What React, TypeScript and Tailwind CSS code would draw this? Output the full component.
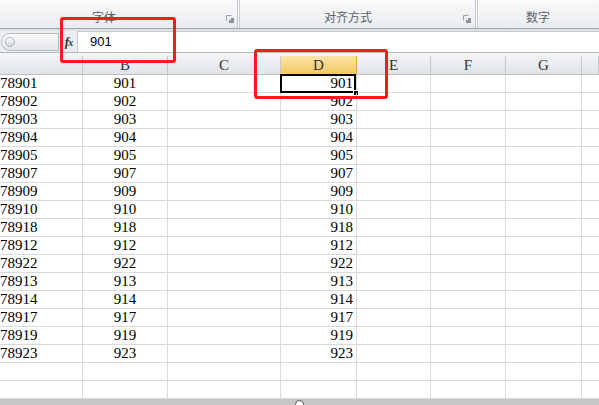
import React from "react";

const colA = [
  "78901", "78902", "78903", "78904", "78905", "78907", "78909", "78910",
  "78918", "78912", "78922", "78913", "78914", "78917", "78919", "78923",
];
const colB = colA.map((v) => v.slice(2));

const headers = ["", "B", "C", "D", "E", "F", "G", ""];
const gridCols = "grid grid-cols-[83px_85px_113px_76px_74px_75px_76px_1fr]";

const Launcher = () => (
  <svg width="8" height="8" viewBox="0 0 8 8" className="block">
    <path d="M0.5 0.5H5.5M0.5 0.5V5.5" stroke="#9aa0a6" strokeWidth="1" fill="none" />
    <rect x="3" y="3" width="5" height="5" fill="#8c9196" />
    <rect x="3" y="3" width="2" height="2" fill="#e6e8eb" />
  </svg>
);

const Divider = () => (
  <div className="flex h-full">
    <div className="w-px h-full bg-[#c3c6ca]" />
    <div className="w-px h-full bg-[#fbfbfc]" />
    <div className="w-px h-full bg-[#c9ccd0]" />
  </div>
);

export default function App() {
  const rows = Array.from({ length: 18 }, (_, i) => i);

  return (
    <div className="relative w-[599px] h-[405px] overflow-hidden bg-white font-['Liberation_Serif',serif]">
      {/* ribbon */}
      <div className="h-[28px] flex bg-gradient-to-b from-[#f9fafb] to-[#e9ecef] text-[12px] text-[#5d6166] font-['Noto_Sans_CJK_SC',sans-serif]">
        <div className="w-[237px] h-full flex items-end pb-[3px] relative">
          <span className="pl-[92px] leading-[16px]">字体</span>
          <div className="absolute left-[226px] top-[15px]">
            <Launcher />
          </div>
        </div>
        <Divider />
        <div className="w-[235px] h-full flex items-end pb-[3px] relative">
          <span className="pl-[84px] leading-[16px]">对齐方式</span>
          <div className="absolute left-[223px] top-[15px]">
            <Launcher />
          </div>
        </div>
        <Divider />
        <div className="flex-1 h-full flex items-end pb-[3px]">
          <span className="pl-[48px] leading-[16px]">数字</span>
        </div>
      </div>
      <div className="h-px bg-[#9ea3a9]" />
      <div className="h-[2px] bg-[#dfe2e6]" />

      {/* formula bar */}
      <div className="h-[21px] flex bg-[#eceef1]">
        <div className="w-[60px] h-full flex items-center pl-[1px]">
          <div className="w-[58px] h-[18px] rounded-l-full border border-[#b7bbc0] bg-gradient-to-b from-[#fbfbfc] to-[#e2e5e8] flex items-center pl-[3px]">
            <div className="w-[10px] h-[10px] rounded-full border border-[#aeb3b8] bg-gradient-to-b from-[#ffffff] to-[#cfd3d7]" />
          </div>
        </div>
        <div className="w-[18px] h-full flex items-center justify-center border-r border-[#c5c9cd]">
          <span className="italic font-bold text-[13px] leading-none text-[#333] tracking-[-1px]">
            f<span className="text-[10px]">x</span>
          </span>
        </div>
        <div className="flex-1 h-full bg-white border-t border-[#c5c9cd] flex items-center pl-[12px] text-[13px] text-black font-['Liberation_Sans',sans-serif]">
          901
        </div>
      </div>
      <div className="h-px bg-[#b4b9be]" />
      <div className="h-[3px] bg-[#f3f4f6]" />

      {/* column headers */}
      <div className={`${gridCols} h-[19px] bg-gradient-to-b from-[#f1f2f4] to-[#e1e4e8] border-b border-[#b9bec4] text-[15px] text-[#333]`}>
        {headers.map((h, i) => (
          <div
            key={i}
            className={`h-full flex items-center justify-center border-r border-[#c4c8cd] leading-none ${
              h === "D" ? "bg-gradient-to-b from-[#fbe4a8] to-[#f4c85e] border-r-[#e0a63c]" : ""
            }`}
          >
            {h}
          </div>
        ))}
      </div>

      {/* cells */}
      <div className="text-[15px] text-black">
        {rows.map((r) => (
          <div key={r} className={`${gridCols} h-[18px]`}>
            <div className="border-r border-b border-[#dadada] flex items-center leading-none overflow-hidden">
              {colA[r] ?? ""}
            </div>
            <div className="border-r border-b border-[#dadada] flex items-center justify-center leading-none">
              {colB[r] ?? ""}
            </div>
            <div className="border-r border-b border-[#dadada]" />
            <div className="relative border-r border-b border-[#dadada] flex items-center justify-end pr-[3px] leading-none">
              {colB[r] ?? ""}
              {r === 0 && (
                <>
                  <div className="absolute left-[-1px] top-[-1px] w-[76px] h-[19px] border-2 border-black" />
                  <div className="absolute left-[72px] top-[15px] w-[6px] h-[6px] bg-black border border-white" />
                </>
              )}
            </div>
            <div className="border-r border-b border-[#dadada]" />
            <div className="border-r border-b border-[#dadada]" />
            <div className="border-r border-b border-[#dadada]" />
            <div className="border-b border-[#dadada]" />
          </div>
        ))}
      </div>

      {/* bottom scroll bar */}
      <div className="relative h-[6px] bg-[#c6c6c6]">
        <div className="absolute left-[295px] top-[1px] w-[9px] h-[9px] rounded-full border border-[#555] bg-white" />
      </div>

      {/* red annotation boxes */}
      <div className="absolute left-[60px] top-[17px] w-[116px] h-[46px] border-[3px] border-[#fb1b1b] rounded-[3px]" />
      <div className="absolute left-[254px] top-[49px] w-[134px] h-[50px] border-[3px] border-[#fb1b1b] rounded-[3px]" />
    </div>
  );
}
